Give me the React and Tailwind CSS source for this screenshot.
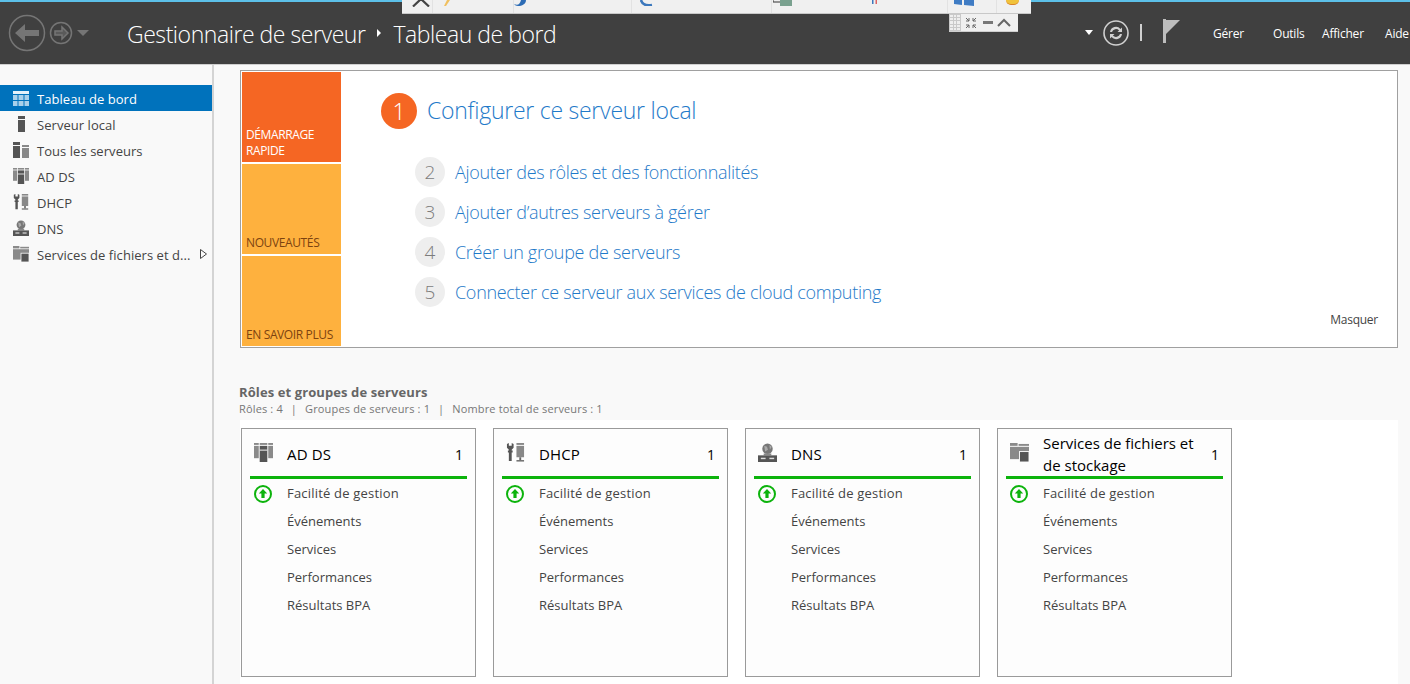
import React from "react";

function Tile({ color, text, textColor }) {
  return (
    <div className={`h-[90px] ${color} flex flex-col justify-end pl-[4px] pb-[3px] text-[12px] leading-[16px] tracking-[-0.38px] whitespace-nowrap ${textColor}`}>
      {text.map((t) => <div key={t}>{t}</div>)}
    </div>
  );
}

const GridIcon = () => (
  <svg width="16" height="15" viewBox="0 0 16 15">
    <rect x="0" y="0" width="16" height="3" fill="#e4f1fa" />
    <g fill="#a9d0ea">
      <rect x="0" y="4" width="4.5" height="5" /><rect x="5.5" y="4" width="5" height="5" /><rect x="11.5" y="4" width="4.5" height="5" />
      <rect x="0" y="10" width="4.5" height="5" /><rect x="5.5" y="10" width="5" height="5" /><rect x="11.5" y="10" width="4.5" height="5" />
    </g>
  </svg>
);
const ServerIcon = () => (
  <svg width="16" height="16" viewBox="0 0 16 16">
    <rect x="5" y="0" width="7" height="3" fill="#555" /><rect x="5" y="4" width="7" height="12" fill="#555" />
  </svg>
);
const AllIcon = () => (
  <svg width="16" height="16" viewBox="0 0 16 16">
    <rect x="0" y="0" width="7" height="3" fill="#555" /><rect x="0" y="4" width="7" height="12" fill="#555" />
    <rect x="9" y="3" width="7" height="2" fill="#888" /><rect x="9" y="6" width="7" height="10" fill="#888" />
  </svg>
);
const AdIcon = ({ s = 16 }) => (
  <svg width={s} height={s} viewBox="0 0 20 20">
    <g fill="#8a8a8a">
      <rect x="0" y="0" width="5" height="2" /><rect x="0" y="3" width="5" height="13" />
      <rect x="15" y="0" width="5" height="2" /><rect x="15" y="3" width="5" height="13" />
      <rect x="6" y="0" width="8" height="2" />
    </g>
    <rect x="6" y="3" width="8" height="17" fill="#555" />
    <rect x="6" y="7" width="8" height="1" fill="#f9f9f9" />
  </svg>
);
const DhcpIcon = ({ s = 16 }) => (
  <svg width={s} height={s} viewBox="0 0 20 20">
    <path d="M1 1v4l2 2v1H2v2h1v9h3v-9h1V8H6V7l2-2V1L6 0v3H3V0z" fill="#555" />
    <rect x="11" y="0" width="8" height="2" fill="#888" /><rect x="11" y="3" width="8" height="12" fill="#888" />
    <rect x="14" y="15" width="2" height="3" fill="#666" /><rect x="11" y="18" width="8" height="1.5" fill="#666" />
  </svg>
);
const DnsIcon = ({ s = 16 }) => (
  <svg width={s} height={s} viewBox="0 0 20 20">
    <circle cx="10" cy="6" r="5.5" fill="#777" /><path d="M6.5 3l3 1 1 3-3 2zM12 2l2.5 2-2 3z" fill="#aaa" />
    <rect x="6" y="11" width="8" height="2" fill="#888" />
    <rect x="0" y="13" width="20" height="7" fill="#555" />
    <rect x="3" y="15.5" width="5" height="1.5" fill="#ddd" /><rect x="12" y="15.5" width="5" height="1.5" fill="#ddd" />
  </svg>
);
const FilesIcon = ({ s = 16 }) => (
  <svg width={s} height={s} viewBox="0 0 20 20">
    <rect x="0" y="0" width="8" height="3" fill="#8a8a8a" /><rect x="9" y="1" width="11" height="2" fill="#8a8a8a" />
    <rect x="0" y="4" width="20" height="13" fill="#8a8a8a" />
    <rect x="10" y="9" width="10" height="11" fill="#555" stroke="#f9f9f9" />
  </svg>
);

const navItems = [
  ["Tableau de bord", GridIcon, true],
  ["Serveur local", ServerIcon],
  ["Tous les serveurs", AllIcon],
  ["AD DS", AdIcon],
  ["DHCP", DhcpIcon],
  ["DNS", DnsIcon],
  ["Services de fichiers et d...", FilesIcon, false, true],
];

function Step({ n, text }) {
  return (
    <div className="flex items-center h-[40px]">
      <div className="w-[30px] h-[30px] rounded-full bg-[#eeeeee] text-[#7c7c7c] flex items-center justify-center text-[19px] font-light mr-[10px]">{n}</div>
      <span className="text-[#1f7ac9] text-[18px] font-light tracking-[-0.3px]">{text}</span>
    </div>
  );
}

const UpBadge = () => (
  <svg width="20" height="20" viewBox="0 0 20 20" className="mt-[-1px]">
    <circle cx="10" cy="10" r="8" fill="none" stroke="#0cb30c" strokeWidth="2" />
    <path d="M10 5l4.2 4.5H11.6V14H8.4V9.5H5.8z" fill="#0cb30c" />
  </svg>
);

function Card({ Icon, title, two }) {
  const rows = ["Événements", "Services", "Performances", "Résultats BPA"];
  return (
    <div className="w-[235px] h-[249px] border border-[#9a9a9a] bg-[#fdfdfd] px-[8px]">
      <div className="h-[50px] border-b-[3px] border-[#0cb30c] flex items-center pl-[4px] pr-[4px]">
        <div className="w-[33px] shrink-0 mt-[-1px]"><Icon s={19} /></div>
        <div className={`flex-1 text-black ${two ? "text-[15px] leading-[22px] mt-[3px]" : "text-[15px] tracking-[0.15px] mt-[4px]"}`}>
          {two ? <>Services de fichiers et<br />de stockage</> : title}
        </div>
        <div className="text-[14px] text-black mt-[3px]">1</div>
      </div>
      <div className="pt-[1px] text-[13px] text-[#444]">
        <div className="flex items-center h-[28px]">
          <div className="w-[37px] pl-[3px]"><UpBadge /></div>
          <span className="tracking-[0.2px]">Facilité de gestion</span>
        </div>
        {rows.map((r) => <div key={r} className="h-[28px] flex items-center pl-[37px]">{r}</div>)}
      </div>
    </div>
  );
}

export default function App() {
  return (
    <div className="w-[1410px] h-[684px] overflow-hidden relative bg-[#f9f9f9] flex flex-col font-['Open_Sans','Noto_Sans',sans-serif]">
      {/* header */}
      <header className="h-[65px] shrink-0 bg-[#404040] border-t-[2px] border-t-[#5cc0e8] border-b border-b-[#cfcfcf] flex items-center text-white">
        <div className="flex items-center pl-[8px] w-[119px] shrink-0">
          <svg width="38" height="38" viewBox="0 0 38 38">
            <circle cx="19" cy="19" r="17.5" fill="none" stroke="#757575" strokeWidth="1.5" />
            <path d="M7 19l10-9v6h14v6H17v6z" fill="#757575" />
          </svg>
          <svg width="24" height="24" viewBox="0 0 24 24" className="ml-[3px]">
            <circle cx="12" cy="12" r="10.5" fill="none" stroke="#757575" strokeWidth="1.5" />
            <path d="M19 12l-6-6v4H6v4h7v4z" fill="#5a5a5a" stroke="#757575" strokeWidth="1.5" />
          </svg>
          <svg width="12" height="6" viewBox="0 0 12 6" className="ml-[4px]"><path d="M0 0h12L6 6z" fill="#757575" /></svg>
        </div>
        <div className="pl-[8px] flex items-center text-[23px] font-light tracking-[-0.45px] text-white mt-[2px]">
          <span>Gestionnaire de serveur</span>
          <svg width="6" height="8" viewBox="0 0 6 8" className="ml-[11px] mr-[11px] mt-[-3px]"><path d="M1 0l4 4-4 4z" fill="#fff" /></svg>
          <span>Tableau de bord</span>
        </div>
        <div className="ml-auto flex items-center text-[12px] font-normal mt-[-1px] tracking-[-0.2px]">
          <svg width="8" height="5" viewBox="0 0 8 5"><path d="M0 0h8L4 5z" fill="#fff" /></svg>
          <svg width="28" height="28" viewBox="0 0 28 28" className="ml-[9px]">
            <circle cx="14" cy="14" r="12" fill="none" stroke="#d0d0d0" strokeWidth="1.6" />
            <path d="M8 13a6 6 0 0 1 10.5-3l1.5-1.5V13h-4.5l1.6-1.6A4.2 4.2 0 0 0 10 13zM20 15a6 6 0 0 1-10.5 3L8 19.5V15h4.5l-1.6 1.6A4.2 4.2 0 0 0 18 15z" fill="#d0d0d0" />
          </svg>
          <div className="w-[2px] h-[17px] bg-[#d0d0d0] ml-[10px]" />
          <svg width="18" height="24" viewBox="0 0 18 24" className="ml-[21px] mt-[-4px]">
            <rect x="0" y="0" width="3" height="24" fill="#bdbdbd" /><path d="M3 1h14L3 15z" fill="#bdbdbd" />
          </svg>
          <span className="ml-[32px] w-[60px] mt-[3px]">Gérer</span>
          <span className="w-[49px] mt-[3px]">Outils</span>
          <span className="w-[63px] mt-[3px]">Afficher</span>
          <span className="w-[25px] whitespace-nowrap mt-[3px]">Aide</span>
        </div>
      </header>

      {/* remote toolbar overlay */}
      <div className="absolute left-[402px] top-0 w-[629px] h-[14px] bg-[#f0f0f0] border-b border-[#c8c8c8] overflow-hidden">
        <svg width="20" height="7" viewBox="0 0 20 7" className="absolute left-[9px] top-0"><path d="M2 6.5L10 -1l8 7.5" stroke="#444" strokeWidth="2.2" fill="none" /></svg>
        <div className="absolute left-[30px] top-0 w-px h-[13px] bg-[#e2e2e2]" />
        <svg width="8" height="6" viewBox="0 0 8 6" className="absolute left-[41px] top-0"><path d="M1 6l3-6h3L3 6z" fill="#f0c060" /></svg>
        <div className="absolute left-[111px] top-0 w-px h-[13px] bg-[#e2e2e2]" />
        <svg width="12" height="6" viewBox="0 0 12 6" className="absolute left-[112px] top-0"><path d="M0 4c4 2 6 0 7-4h5c0 4-4 6-8 6-2 0-3-1-4-2z" fill="#2c6cb5" /></svg>
        <div className="absolute left-[229px] top-0 w-px h-[13px] bg-[#e2e2e2]" />
        <svg width="14" height="6" viewBox="0 0 14 6" className="absolute left-[238px] top-0"><path d="M1 0c1 4 5 6 11 5" stroke="#3c78bd" strokeWidth="2.6" fill="none" /></svg>
        <div className="absolute left-[369px] top-0 w-px h-[13px] bg-[#e2e2e2]" />
        <svg width="20" height="6" viewBox="0 0 20 6" className="absolute left-[371px] top-0">
          <path d="M0 0v2h8" stroke="#333" strokeWidth="1" fill="none" /><rect x="7" y="0" width="12" height="6" fill="#7aa18f" />
        </svg>
        <svg width="6" height="4" viewBox="0 0 6 4" className="absolute left-[470px] top-0"><rect x="0" y="0" width="1.5" height="4" fill="#3a78bd" /><rect x="3.5" y="0" width="1.5" height="4" fill="#d66" /></svg>
        <div className="absolute left-[545px] top-0 w-px h-[13px] bg-[#e2e2e2]" />
        <svg width="20" height="6" viewBox="0 0 20 6" className="absolute left-[552px] top-0"><path d="M0 0h8v5l-8-1zM10 0h10v6l-10-1z" fill="#3f7cc4" /></svg>
        <div className="absolute left-[594px] top-0 w-px h-[13px] bg-[#e2e2e2]" />
        <div className="absolute left-[604px] top-0 w-[13px] h-[5px] rounded-b-full bg-[#f0c23a] border-b border-[#d9822b]" />
      </div>
      <div className="absolute left-[949px] top-[14px] w-[69px] h-[18px] bg-[#f0f0f0] border-b border-[#cfcfcf] flex items-center">
        <div className="w-[12px] h-[17px] bg-[#c9c9c9] grid grid-cols-3 gap-px p-px">
          {Array.from({ length: 15 }).map((_, i) => <div key={i} className="bg-[#eeeeee]" />)}
        </div>
        <svg width="12" height="12" viewBox="0 0 12 12" className="ml-[4px]"><path d="M1 1l3 3M4 1v3H1M11 1L8 4M8 1v3h3M1 11l3-3M4 11V8H1M11 11L8 8M8 11V8h3" stroke="#666" fill="none" /></svg>
        <div className="w-[10px] h-[3px] bg-[#777] ml-[6px]" />
        <svg width="16" height="10" viewBox="0 0 16 10" className="ml-[3px]"><path d="M2 8l6-6 6 6" stroke="#666" strokeWidth="2" fill="none" /></svg>
      </div>

      <div className="flex-1 flex min-h-0">
        {/* sidebar */}
        <aside className="w-[214px] shrink-0 border-r-[2px] border-[#d4d4d4] pt-[20px]">
          {navItems.map(([label, Icon, active, arrow]) => (
            <div key={label} className={`h-[26px] flex items-center pl-[13px] text-[13px] ${active ? "bg-[#0072bc] text-white" : "text-[#444]"}`}>
              <div className="w-[24px] shrink-0 flex"><Icon /></div>
              <span className="flex-1 whitespace-nowrap tracking-[0.05px] mt-[4px]">{label}</span>
              {arrow && (
                <svg width="7" height="10" viewBox="0 0 7 10" className="mr-[5px]"><path d="M.5.5l6 4.5-6 4.5z" fill="none" stroke="#444" /></svg>
              )}
            </div>
          ))}
        </aside>

        {/* main */}
        <main className="flex-1 min-w-0 pl-[26px] pr-[12px] pt-[5px]">
          <section className="h-[278px] border border-[#a0a0a0] bg-white flex p-px">
            <div className="w-[99px] shrink-0 flex flex-col gap-[2px]">
              <Tile color="bg-[#f56623]" text={["DÉMARRAGE", "RAPIDE"]} textColor="text-white" />
              <Tile color="bg-[#feb13e]" text={["NOUVEAUTÉS"]} textColor="text-[#7c4310]" />
              <Tile color="bg-[#feb13e]" text={["EN SAVOIR PLUS"]} textColor="text-[#7c4310]" />
            </div>
            <div className="flex-1 relative pl-[40px] pt-[21px]">
              <div className="flex items-center">
                <div className="w-[36px] h-[36px] rounded-full bg-[#f56623] text-white flex items-center justify-center text-[23px] font-light mr-[10px]">1</div>
                <span className="text-[#1f7ac9] text-[23px] font-light tracking-[-0.25px] mt-[-2px]">Configurer ce serveur local</span>
              </div>
              <div className="pl-[34px] pt-[23px]">
                <Step n="2" text="Ajouter des rôles et des fonctionnalités" />
                <Step n="3" text="Ajouter d’autres serveurs à gérer" />
                <Step n="4" text="Créer un groupe de serveurs" />
                <Step n="5" text="Connecter ce serveur aux services de cloud computing" />
              </div>
              <div className="absolute right-[18px] bottom-[17px] text-[12px] text-[#444] tracking-[-0.25px]">Masquer</div>
            </div>
          </section>

          <div className="pt-[35px] ml-[-1px]">
            <div className="text-[13px] font-bold leading-[18px] text-[#666] tracking-[0.1px]">Rôles et groupes de serveurs</div>
            <div className="text-[11px] leading-[15px] text-[#777] tracking-[0.15px]">
              Rôles : 4<span className="mx-[8px]">|</span>Groupes de serveurs : 1<span className="mx-[8px]">|</span>Nombre total de serveurs : 1
            </div>
          </div>
          <div className="bg-white mt-[4px] pt-[8px] pl-px h-[270px] flex gap-[17px]">
            <Card Icon={AdIcon} title="AD DS" />
            <Card Icon={DhcpIcon} title="DHCP" />
            <Card Icon={DnsIcon} title="DNS" />
            <Card Icon={FilesIcon} title="Services" two />
          </div>
        </main>
      </div>
    </div>
  );
}
